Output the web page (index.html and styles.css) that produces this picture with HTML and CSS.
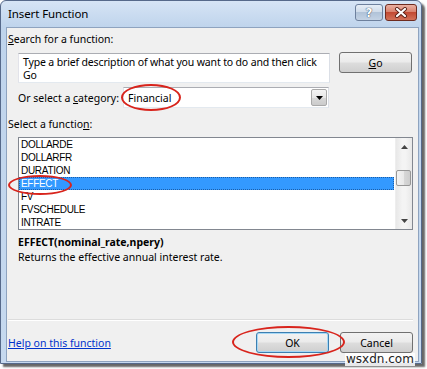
FILE: index.html
```html
<!DOCTYPE html>
<html lang="en">
<head>
    <meta charset="UTF-8">
    <title>Insert Function</title>
    <link rel="stylesheet" href="styles.css">
</head>
<body>
    <div class="window">
        <div class="titlebar">
            <span class="title">Insert Function</span>
            <div class="caption-buttons">
                <span class="cap help">?</span>
                <span class="cap close">
                    <svg width="14" height="11" viewBox="0 0 14 11">
                        <path d="M3 2 L11 9 M11 2 L3 9" stroke="#5a2016" stroke-width="4" stroke-linecap="round"/>
                        <path d="M3 2 L11 9 M11 2 L3 9" stroke="#fff" stroke-width="2.2" stroke-linecap="round"/>
                    </svg>
                </span>
            </div>
        </div>

        <div class="client">
            <div class="label"><u>S</u>earch for a function:</div>
            <div class="search-row">
                <div class="search-box">Type a brief description of what you want to do and then click Go</div>
                <button class="btn go"><u>G</u>o</button>
            </div>

            <div class="cat-row">
                <span class="cat-label">Or select a <u>c</u>ategory:</span>
                <div class="combo">
                    <span class="combo-text">Financial</span>
                    <span class="combo-arrow">
                        <svg width="7" height="4" viewBox="0 0 7 4"><path d="M0 0 H7 L3.5 4 Z" fill="#000"/></svg>
                    </span>
                </div>
            </div>

            <div class="label list-label">Select a functio<u>n</u>:</div>
            <div class="listbox">
                <ul class="items">
                    <li>DOLLARDE</li>
                    <li>DOLLARFR</li>
                    <li>DURATION</li>
                    <li class="selected">EFFECT</li>
                    <li>FV</li>
                    <li>FVSCHEDULE</li>
                    <li>INTRATE</li>
                </ul>
                <div class="scrollbar">
                    <svg class="arrow-up" width="7" height="4" viewBox="0 0 7 4"><path d="M0 4 H7 L3.5 0 Z" fill="#444"/></svg>
                    <div class="track">
                        <div class="thumb"></div>
                    </div>
                    <svg class="arrow-down" width="7" height="4" viewBox="0 0 7 4"><path d="M0 0 H7 L3.5 4 Z" fill="#444"/></svg>
                </div>
            </div>

            <div class="syntax">EFFECT(nominal_rate,npery)</div>
            <div class="desc">Returns the effective annual interest rate.</div>

            <div class="spacer"></div>
            <div class="separator"></div>

            <div class="footer">
                <a class="help-link" href="#">Help on this function</a>
                <div class="buttons">
                    <button class="btn ok">OK</button>
                    <button class="btn">Cancel</button>
                </div>
            </div>
        </div>
    </div>

    <!-- red annotation rings -->
    <div class="mark mark-category"></div>
    <div class="mark mark-effect"></div>
    <div class="mark mark-ok"></div>

    <div class="watermark">wsxdn.com</div>
</body>
</html>
```

FILE: styles.css
```css
* {
    margin: 0;
    padding: 0;
    box-sizing: border-box;
}

body {
    width: 427px;
    height: 369px;
    overflow: hidden;
    position: relative;
    background: #fff;
    font-family: "Noto Sans", "Open Sans", sans-serif;
    font-size: 10.5px;
    color: #000;
}

.window {
    width: 422px;
    height: 364px;
    display: flex;
    flex-direction: column;
    padding: 0 2px 1px 5px;
    background: linear-gradient(to bottom, #d6e4f5, #bfd4ec 26px, #c6d9ef);
    border: 1px solid #56698a;
    border-radius: 6px 6px 0 0;
    box-shadow: 3px 3px 2px rgba(0,0,0,0.6);
}

.titlebar {
    height: 26px;
    display: flex;
    justify-content: space-between;
}

.title {
    padding-left: 2px;
    line-height: 26px;
    font-size: 11.5px;
    letter-spacing: -0.1px;
}

.caption-buttons {
    display: flex;
    gap: 2px;
    margin-top: 3px;
    margin-right: 2px;
}

.cap {
    height: 17px;
    display: flex;
    align-items: center;
    justify-content: center;
    border-radius: 3px;
}

.cap.help {
    width: 28px;
    border: 1px solid #6d809d;
    background: linear-gradient(#e6edf6 0%, #d0dcea 45%, #b1c3d8 50%, #c3d2e4 100%);
    color: #fff;
    font-family: "DejaVu Sans", sans-serif;
    font-size: 12px;
    font-weight: bold;
    text-shadow: 0 0 1px #34465e, 0 0 1px #34465e;
}

.cap.close {
    width: 32px;
    border: 1px solid #6e2b1f;
    background: linear-gradient(#eab0a2 0%, #d9836f 45%, #c24a33 50%, #d27259 100%);
}

.client {
    flex: 1;
    display: flex;
    flex-direction: column;
    padding: 4px 5px 8px 1px;
    background: #f0f0f0;
    border: 1px solid #8ea3bf;
}

.label {
    line-height: 14px;
}

.search-row {
    display: flex;
    align-items: flex-start;
    margin-top: 6px;
}

.search-box {
    width: 312px;
    height: 30px;
    margin: 1px 0 0 10px;
    padding: 2px 4px;
    background: #fff;
    border: 1px solid #abadb3;
    border-color: #abadb3 #dbdfe6 #e3e9ef #e2e3ea;
    line-height: 12.5px;
    letter-spacing: -0.15px;
}

.btn {
    width: 73px;
    height: 21px;
    border: 1px solid #707070;
    border-radius: 3px;
    background: linear-gradient(#f2f2f2 0%, #ebebeb 48%, #dddddd 52%, #cfcfcf 100%);
    font-family: inherit;
    font-size: 10.5px;
    color: #000;
}

.btn.go {
    margin-left: 9px;
}

.cat-row {
    display: flex;
    align-items: center;
    margin-top: 4px;
    padding-left: 10px;
}

.cat-label {
    width: 105px;
    white-space: nowrap;
}

.combo {
    width: 206px;
    height: 21px;
    display: flex;
    align-items: center;
    justify-content: space-between;
    padding: 0 1px 0 4px;
    background: #fff;
    border: 1px solid #abadb3;
    border-color: #abadb3 #dbdfe6 #e3e9ef #e2e3ea;
}

.combo-arrow {
    width: 16px;
    height: 17px;
    display: flex;
    align-items: center;
    justify-content: center;
    border: 1px solid #a9a9a9;
    border-radius: 2px;
    background: linear-gradient(#f4f4f4 0%, #e7e7e7 50%, #d8d8d8 52%, #cbcbcb 100%);
}

.list-label {
    margin-top: 9px;
}

.listbox {
    width: 395px;
    height: 93px;
    margin: 6px 0 0 10px;
    display: flex;
    background: #fff;
    border: 1px solid #828790;
}

.items {
    flex: 1;
    list-style: none;
    padding-right: 1px;
}

.items li {
    height: 13px;
    line-height: 13px;
    padding-left: 2px;
    font-family: "Liberation Sans", Arial, sans-serif;
    font-size: 10px;
    letter-spacing: -0.3px;
}

.items li.selected {
    background: #3399ff;
    color: #fff;
    outline: 1px dotted #1c5ea8;
    outline-offset: -1px;
}

.scrollbar {
    width: 17px;
    display: flex;
    flex-direction: column;
    align-items: center;
    background: linear-gradient(to right, #e8e8e8, #f4f4f4 40%, #f4f4f4 60%, #e8e8e8);
    border-left: 1px solid #eee;
}

.arrow-up {
    margin-top: 7px;
}

.arrow-down {
    margin-bottom: 6px;
}

.track {
    flex: 1;
    width: 100%;
    padding-top: 21px;
}

.thumb {
    width: 15px;
    height: 16px;
    border: 1px solid #979797;
    border-radius: 2px;
    background: linear-gradient(to right, #f3f3f3 0%, #e9e9e9 50%, #d8d8d8 52%, #cdcdcd 100%);
}

.syntax {
    margin: 5px 0 0 10px;
    line-height: 15px;
    font-weight: bold;
}

.desc {
    margin-left: 10px;
    line-height: 15px;
}

.spacer {
    flex: 1;
}

.separator {
    height: 2px;
    background: #dcdcdc;
    border-bottom: 1px solid #fff;
}

.footer {
    display: flex;
    align-items: center;
    justify-content: space-between;
    margin-top: 11px;
}

.help-link {
    color: #0033cc;
}

.buttons {
    display: flex;
    gap: 11px;
}

.btn.ok {
    border-color: #3c7fb1;
    box-shadow: inset 0 0 0 1px #a7d8f5;
}

.mark {
    position: absolute;
    border: 2px solid #d8241c;
    border-radius: 50%;
}

.mark-category {
    left: 121px;
    top: 84px;
    width: 60px;
    height: 27px;
}

.mark-effect {
    left: 8px;
    top: 175px;
    width: 64px;
    height: 20px;
}

.mark-ok {
    left: 232px;
    top: 326px;
    width: 113px;
    height: 32px;
}

.watermark {
    position: absolute;
    left: 345px;
    top: 353px;
    padding: 0 1px;
    background: rgba(255,255,255,0.85);
    font-family: "DejaVu Sans", sans-serif;
    font-size: 12px;
    line-height: 13px;
    color: #222;
}
```
